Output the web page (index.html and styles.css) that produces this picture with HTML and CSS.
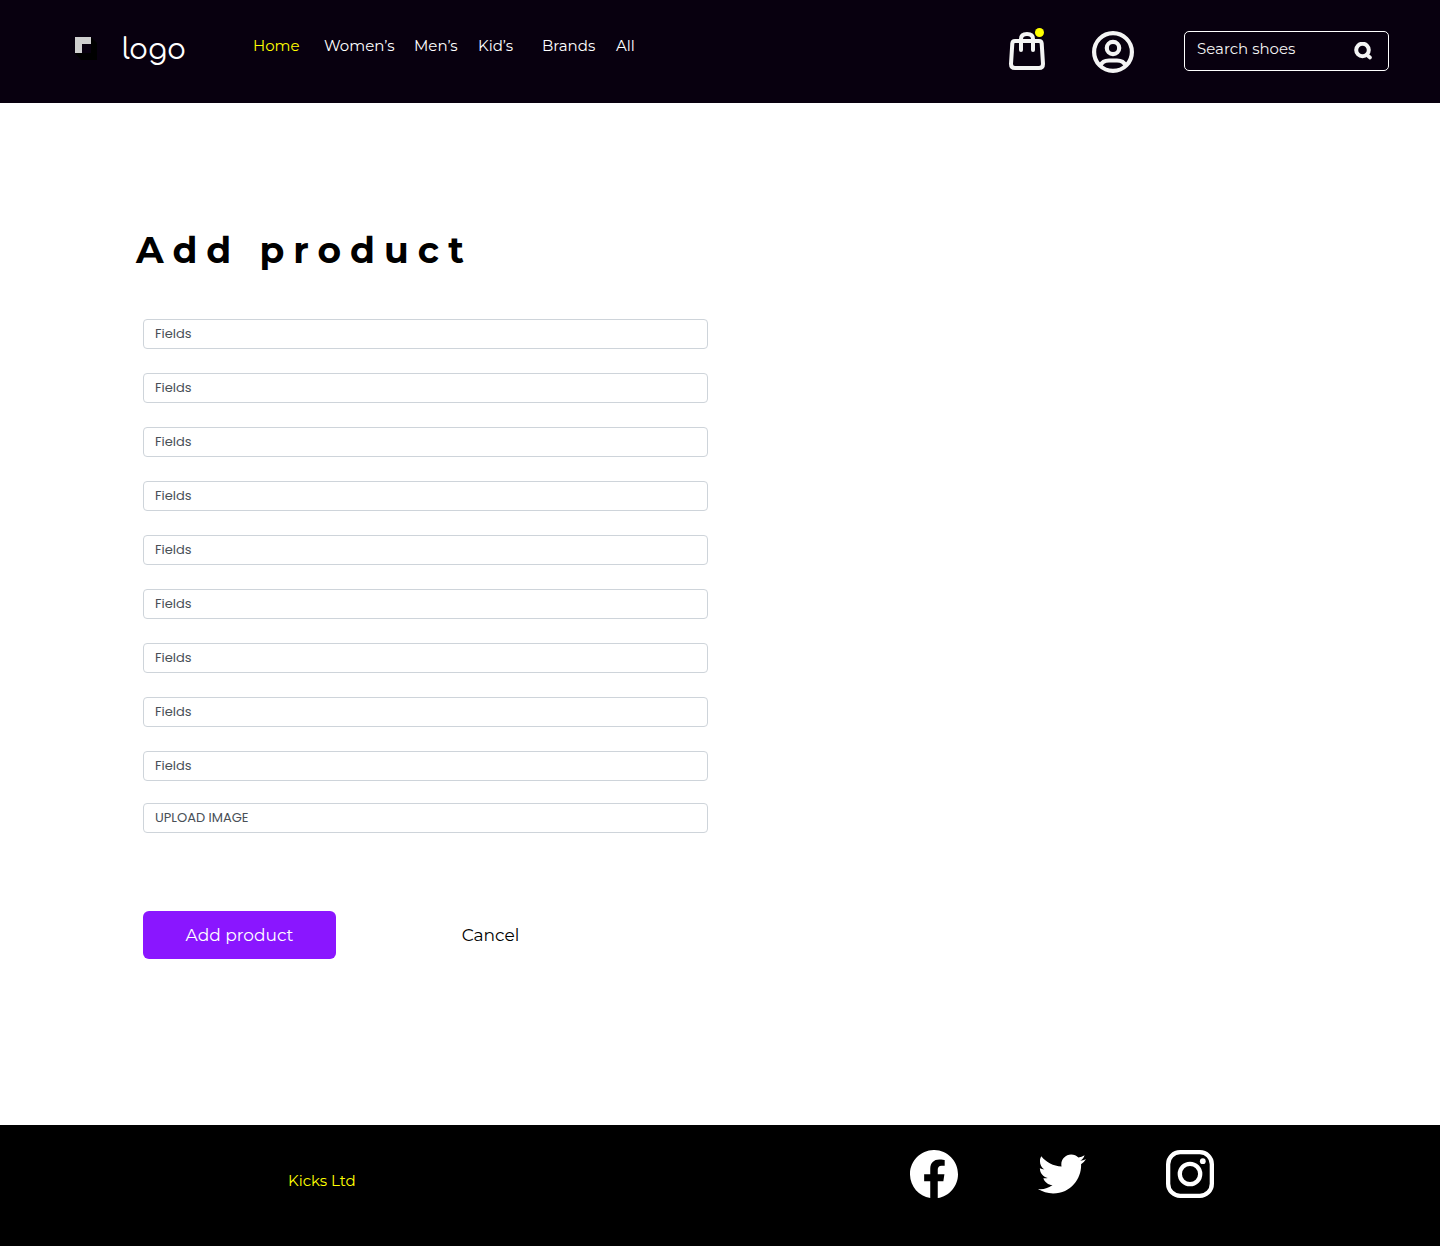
FILE: index.html
```html
<!DOCTYPE html>
<html lang="en">
<head>
<meta charset="utf-8">
<meta name="viewport" content="width=device-width, initial-scale=1">
<title>Add product</title>
<link rel="stylesheet" href="styles.css">
</head>
<body>
<header class="header">
  <a class="logo" href="#" aria-label="Logo">
    <svg class="logo-mark" width="24" height="24" viewBox="0 0 24 24" aria-hidden="true">
      <path fill="#000" d="M16 0l6 6v17H6l-6-7z"/>
      <path fill="#08000f" d="M7 7h9v9H7z"/>
      <path fill="#cfcfcf" d="M0 0h16v7H7v9H0z"/>
    </svg>
    <span class="logo-text">logo</span>
  </a>
  <nav class="nav" aria-label="Main">
    <a class="active" href="#">Home</a>
    <a href="#">Women’s</a>
    <a href="#">Men’s</a>
    <a href="#">Kid’s</a>
    <a href="#">Brands</a>
    <a href="#">All</a>
  </nav>
  <div class="tools">
    <a class="bag" href="#" aria-label="Shopping bag">
      <svg width="36" height="40" viewBox="0 0 36 40" fill="none" stroke="#f4f4f4" stroke-width="4" stroke-linecap="round" stroke-linejoin="round" aria-hidden="true">
        <path d="M6 10h24q2.500 0 2.700 2.500L34 33q0 4-4 4H6q-4 0-4-4l1.300-20.500Q3.500 10 6 10zM12 19V8q0-5 6-5t6 5v11"/>
      </svg>
      <span class="badge"></span>
    </a>
    <a class="account" href="#" aria-label="Account">
      <svg width="42" height="42" viewBox="0 0 42 42" fill="none" stroke="#f4f4f4" stroke-width="4.200" aria-hidden="true">
        <circle cx="21" cy="21" r="18.900"/><circle cx="21" cy="17" r="6.200"/>
        <path d="M8 34.500c2.500-3.500 4-5 9-5h8c5 0 6.500 1.500 9 5"/>
      </svg>
    </a>
    <form class="search" role="search">
      <input type="search" aria-label="Search shoes" placeholder="Search shoes">
      <button type="button" aria-label="Search">
        <svg width="18" height="18" viewBox="0 0 18 18" fill="none" stroke="#f4f4f4" stroke-width="4" stroke-linecap="round" aria-hidden="true"><circle cx="8.500" cy="8" r="6.300"/><path d="M13 13l3 2.500" stroke-width="3.600"/></svg>
      </button>
    </form>
  </div>
</header>
<main class="main">
  <h1>Add product</h1>
  <form class="form">
    <div class="fields">
      <input type="text" aria-label="Field 1" placeholder="Fields">
      <input type="text" aria-label="Field 2" placeholder="Fields">
      <input type="text" aria-label="Field 3" placeholder="Fields">
      <input type="text" aria-label="Field 4" placeholder="Fields">
      <input type="text" aria-label="Field 5" placeholder="Fields">
      <input type="text" aria-label="Field 6" placeholder="Fields">
      <input type="text" aria-label="Field 7" placeholder="Fields">
      <input type="text" aria-label="Field 8" placeholder="Fields">
      <input type="text" aria-label="Field 9" placeholder="Fields">
    </div>
    <input class="upload" type="text" aria-label="Upload image" placeholder="UPLOAD IMAGE">
    <div class="actions">
      <button class="primary" type="button">Add product</button>
      <button class="cancel" type="button">Cancel</button>
    </div>
  </form>
</main>
<footer class="footer">
  <a class="company" href="#">Kicks Ltd</a>
  <div class="social">
    <a href="#" aria-label="Facebook"><svg width="48" height="48" viewBox="0 0 16 16" fill="#fff" aria-hidden="true"><path d="M16 8.049c0-4.446-3.582-8.050-8-8.050C3.580 0-.002 3.603-.002 8.050c0 4.017 2.926 7.347 6.750 7.951v-5.625h-2.030V8.050H6.750V6.275c0-2.017 1.195-3.131 3.022-3.131.876 0 1.791.157 1.791.157v1.980h-1.009c-.993 0-1.303.621-1.303 1.258v1.510h2.218l-.354 2.326H9.250V16c3.824-.604 6.750-3.934 6.750-7.951z"/></svg></a>
    <a href="#" aria-label="Twitter"><svg width="48" height="48" viewBox="0 0 24 24" fill="#fff" aria-hidden="true"><path d="M23.954 4.569c-.885.389-1.830.654-2.825.775 1.014-.611 1.794-1.574 2.163-2.723-.951.555-2.005.959-3.127 1.184-.896-.959-2.173-1.559-3.591-1.559-2.717 0-4.920 2.203-4.920 4.917 0 .390.045.765.127 1.124C7.691 8.094 4.066 6.130 1.640 3.161c-.427.722-.666 1.561-.666 2.475 0 1.710.870 3.213 2.188 4.096-.807-.026-1.566-.248-2.228-.616v.061c0 2.385 1.693 4.374 3.946 4.827-.413.111-.849.171-1.296.171-.314 0-.615-.030-.916-.086.631 1.953 2.445 3.377 4.604 3.417-1.680 1.319-3.809 2.105-6.102 2.105-.390 0-.779-.023-1.170-.067 2.189 1.394 4.768 2.209 7.557 2.209 9.054 0 13.999-7.496 13.999-13.986 0-.209 0-.420-.015-.630.961-.689 1.800-1.560 2.460-2.548z"/></svg></a>
    <a href="#" aria-label="Instagram"><svg width="48" height="48" viewBox="0 0 48 48" fill="none" stroke="#fff" stroke-width="4.300" aria-hidden="true"><rect x="2.150" y="2.150" width="43.700" height="43.700" rx="12"/><circle cx="24" cy="24" r="10.200"/><circle cx="36.800" cy="11.200" r="2.900" fill="#fff" stroke="none"/></svg></a>
  </div>
</footer>
</body>
</html>
```
FILE: styles.css
```css
* { box-sizing: border-box; }
body {
  margin: 0;
  min-height: 100vh;
  display: flex;
  flex-direction: column;
  background: #fff;
  color: #000;
  font-family: Montserrat, Inter, sans-serif;
  font-size: 15px;
}
a { color: inherit; text-decoration: none; }
svg { display: block; }
input, button { font: inherit; color: inherit; }
button { border: 0; padding: 0; background: none; cursor: pointer; }

.header {
  display: flex;
  align-items: flex-start;
  padding: 28px 51px 30px 75px;
  background: #08000f;
  color: #fff;
}
.logo { display: flex; width: 178px; gap: 23px; }
.logo-mark { margin-top: 9px; }
.logo-text {
  font-family: Comfortaa, Quicksand, Lato, sans-serif;
  font-size: 28px;
  line-height: 44px;
}
.nav {
  display: grid;
  grid-template-columns: 71px 90px 64px 64px 74px auto;
  line-height: 20px;
  padding-top: 8px;
}
.active, .company { color: #ff0; }
.tools { display: flex; align-items: flex-start; margin-left: auto; }
.bag { position: relative; padding-top: 3px; margin-right: 47px; }
.badge {
  position: absolute;
  top: 0;
  right: 1px;
  width: 9px;
  height: 9px;
  border-radius: 50%;
  background: #ff0;
}
.account { padding-top: 3px; margin-right: 50px; }
.search {
  display: flex;
  width: 205px;
  height: 40px;
  margin-top: 3px;
  padding: 0 16px 0 12px;
  border: 1px solid #fff;
  border-radius: 5px;
}
.search input {
  flex: 1;
  min-width: 0;
  padding: 0 0 6px;
  border: 0;
  outline: 0;
  background: none;
}
.search input::placeholder { color: #f4f4f4; opacity: 1; }

.main { flex: 1; padding: 123px 136px 166px; }
h1 {
  margin: 0 0 45px;
  font-size: 36px;
  line-height: 48px;
  font-weight: 700;
  letter-spacing: 9px;
}
.form { max-width: 572px; padding-left: 7px; font-size: 13px; }
.fields { display: grid; gap: 24px; margin-bottom: 22px; }
.form input {
  display: block;
  width: 100%;
  height: 30px;
  padding: 0 11px;
  border: 1px solid #ced4da;
  border-radius: 4px;
  font-family: Poppins, Inter, sans-serif;
}
.form input::placeholder { color: #495057; opacity: 1; }
.actions { display: flex; gap: 58px; margin-top: 78px; font-size: 17px; }
.actions button { width: 193px; height: 48px; border-radius: 6px; }
.primary { background: #8a16ff; color: #fff; }

.footer {
  display: flex;
  justify-content: space-between;
  align-items: flex-start;
  padding: 25px 226px 48px 288px;
  background: #000;
}
.company { padding-top: 21px; line-height: 20px; }
.social { display: flex; gap: 80px; }
```
